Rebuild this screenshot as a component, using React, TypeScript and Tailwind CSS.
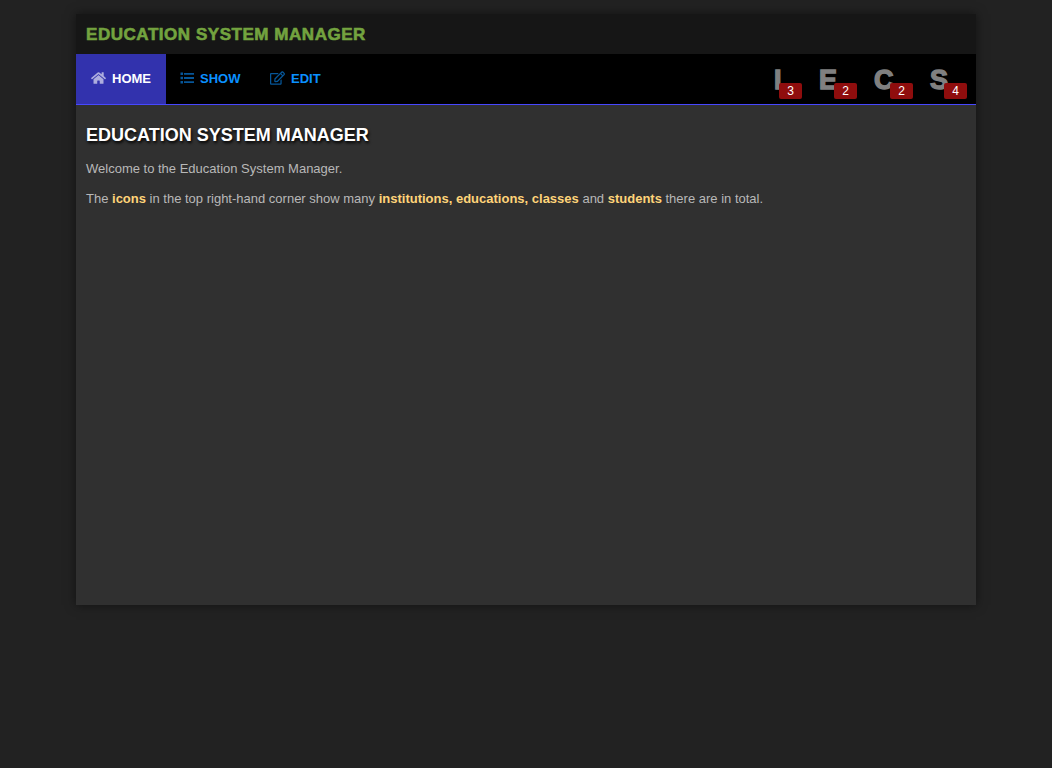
import { FaHome, FaRegEdit } from 'react-icons/fa';

const counters = [
  { letter: 'I', count: 3, box: 'w-[28px]', gap: 'mr-[17px]' },
  { letter: 'E', count: 2, box: 'w-[38px]', gap: 'mr-[17px]' },
  { letter: 'C', count: 2, box: 'w-[39px]', gap: 'mr-[17px]' },
  { letter: 'S', count: 4, box: 'w-[37px]', gap: 'mr-[9px]' },
];

function Key({ children }: { children: string }) {
  return <strong className="font-bold text-[#ffd479]">{children}</strong>;
}

function ListIcon({ className }: { className: string }) {
  return (
    <svg viewBox="0 0 14 12" fill="currentColor" className={className}>
      <path d="M0.5 0.5h2.5v2.5h-2.5zM4 1h10v1.7h-10zM0.5 4.8h2.5v2.4h-2.5zM4 5.1h10v1.8h-10zM0.5 9h2.5v2.5h-2.5zM4 9.3h10v1.7h-10z" />
    </svg>
  );
}

export default function App() {
  return (
    <div className="min-h-screen bg-[#222] pt-[14px] font-['Liberation_Sans',Arial,sans-serif] text-[13px] leading-[20px] text-[#b8b8b8]">
      <div className="mx-auto flex h-[591px] w-[900px] flex-col bg-[#303030] shadow-[0_0_10px_rgba(0,0,0,0.5)]">
        <header className="flex h-[40px] items-center bg-[#161616] px-[10px] pt-px">
          <span className="whitespace-nowrap text-[17px] font-black tracking-[0.54px] text-[#73a33f] [-webkit-text-stroke:0.6px_#73a33f]">EDUCATION SYSTEM MANAGER</span>
        </header>
        <nav className="flex h-[51px] justify-between border-b border-[#4747ff] bg-black">
          <div className="flex font-bold text-[#0a90ff]">
            <a className="flex w-[90px] items-center bg-[#3232ad] pl-[15px] text-white">
              <FaHome className="mr-[6px] mb-[2px] h-[14px] w-[15px] opacity-60" />
              <span className="mb-px">HOME</span>
            </a>
            <a className="flex w-[89px] items-center pl-[14px]">
              <ListIcon className="mr-[6px] mb-[2px] h-[12px] w-[14px] opacity-60" />
              <span className="mb-px">SHOW</span>
            </a>
            <a className="flex items-center pl-[15px]">
              <FaRegEdit className="mr-[6px] mb-[2px] h-[14px] w-[15px] opacity-60" />
              <span className="mb-px">EDIT</span>
            </a>
          </div>
          <div className="flex pt-[11px]">
            {counters.map((c) => (
              <div key={c.letter} className={`relative h-[34px] ${c.box} ${c.gap}`}>
                <span className="block text-[27px] font-black leading-[30px] text-[#808080] [-webkit-text-stroke:1.4px_#808080]">{c.letter}</span>
                <span className="absolute right-0 bottom-0 h-4 w-[23px] rounded-[2px] bg-[#8f0d0d] text-center text-[12px] leading-4 text-white">
                  {c.count}
                </span>
              </div>
            ))}
          </div>
        </nav>
        <main className="px-[10px] pt-[20px]">
          <h1 className="text-[18px] font-bold leading-[20px] text-white [text-shadow:1px_2px_3px_#000]">EDUCATION SYSTEM MANAGER</h1>
          <p className="mt-[14px]">Welcome to the Education System Manager.</p>
          <p className="mt-[10px]">
            The <Key>icons</Key> in the top right-hand corner show many <Key>institutions, educations, classes</Key> and <Key>students</Key> there are in total.
          </p>
        </main>
      </div>
    </div>
  );
}
